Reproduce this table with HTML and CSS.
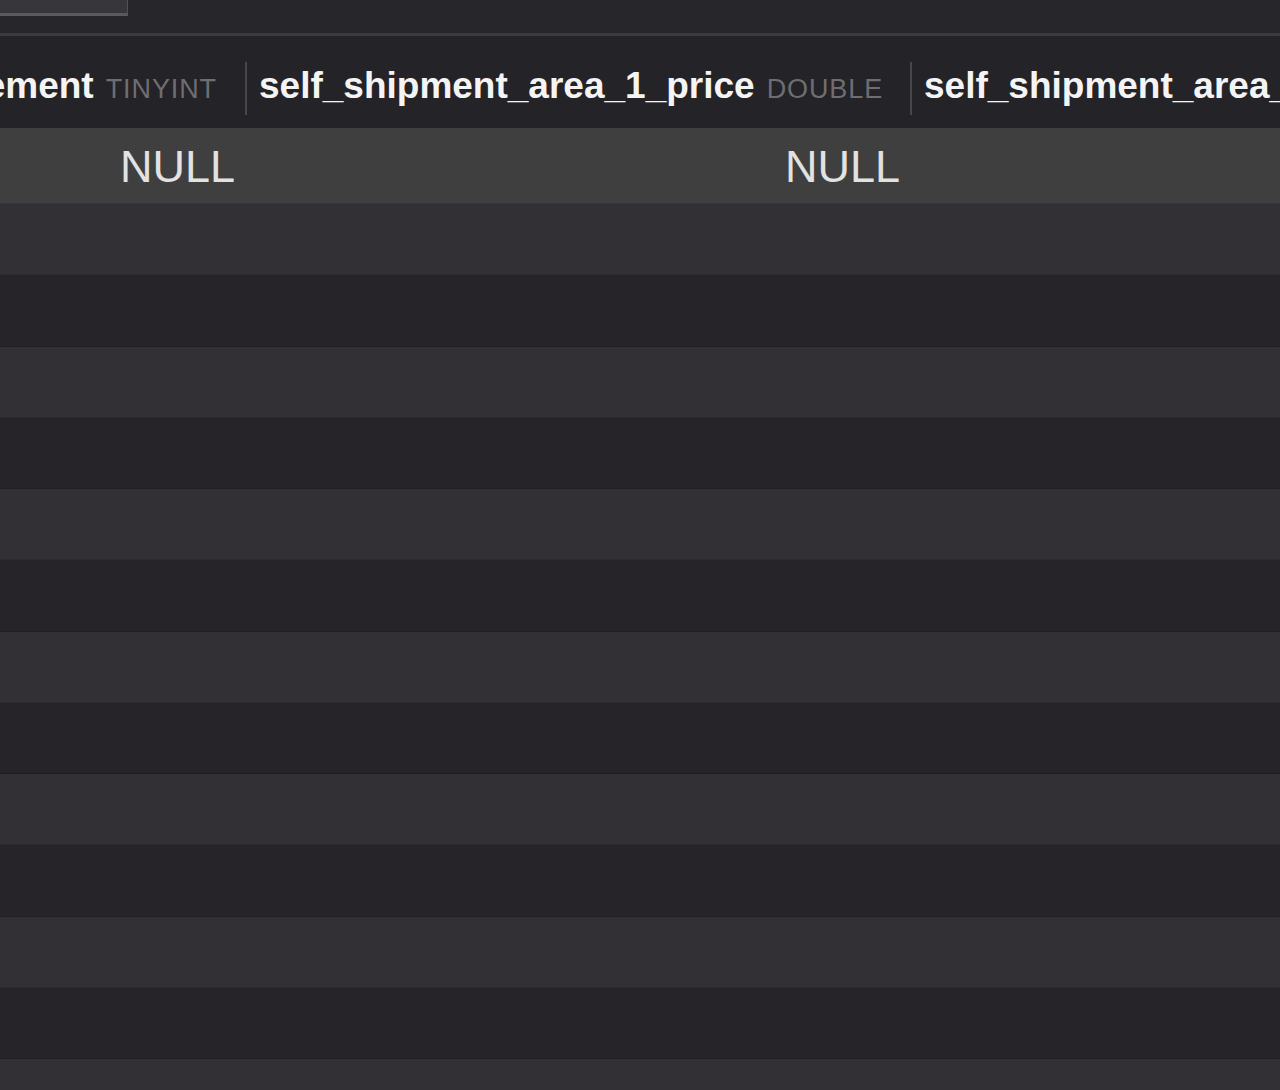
FILE: index.html
```html
<!DOCTYPE html>
<html lang="en">
<head>
<meta charset="utf-8">
<title>Table view</title>
<link rel="stylesheet" href="styles.css">
</head>
<body>
<div class="app">
  <div class="topbar">
    <div class="search-box"></div>
  </div>
  <div class="grid">
    <div class="row head">
      <div class="cell c1"><span class="name">self_management</span><span class="type">TINYINT</span></div>
      <div class="sep"></div>
      <div class="cell c2"><span class="name">self_shipment_area_1_price</span><span class="type">DOUBLE</span></div>
      <div class="sep"></div>
      <div class="cell c3"><span class="name">self_shipment_area_2_price</span><span class="type">DOUBLE</span></div>
    </div>
    <div class="row data selected">
      <div class="dcell c1">NULL</div>
      <div class="dcell c2">NULL</div>
      <div class="dcell c3"></div>
    </div>
    <div class="row data odd"></div>
    <div class="row data even"></div>
    <div class="row data odd"></div>
    <div class="row data even"></div>
    <div class="row data odd"></div>
    <div class="row data even"></div>
    <div class="row data odd"></div>
    <div class="row data even"></div>
    <div class="row data odd"></div>
    <div class="row data even"></div>
    <div class="row data odd"></div>
    <div class="row data even"></div>
    <div class="row data odd"></div>
  </div>
</div>
</body>
</html>
```

FILE: styles.css
```css
html, body {
  margin: 0;
  padding: 0;
  background: #252428;
  overflow: hidden;
}
.app {
  width: 1280px;
  height: 1090px;
  overflow: hidden;
  font-family: "Liberation Sans", Arial, sans-serif;
}
.topbar {
  height: 33px;
  background: #27262a;
  border-bottom: 3px solid #3b3a3d;
}
.search-box {
  width: 127px;
  height: 13px;
  background: #37363a;
  border-right: 1px solid #535255;
  border-bottom: 3px solid #5a595c;
}
.grid {
  display: flex;
  flex-direction: column;
}
.row {
  display: flex;
  box-sizing: border-box;
}
.row.head {
  height: 92px;
  background: #242327;
  align-items: center;
}
.cell {
  display: flex;
  align-items: baseline;
  overflow: hidden;
  white-space: nowrap;
  padding-top: 8px;
}
.cell.c1 {
  width: 245px;
  flex: none;
  justify-content: flex-end;
  padding-right: 28px;
  box-sizing: border-box;
}
.cell.c2 {
  width: 663px;
  flex: none;
  padding-left: 12px;
  box-sizing: border-box;
}
.cell.c3 {
  flex: 1;
  padding-left: 12px;
}
.name {
  font-weight: bold;
  font-size: 37px;
  color: #f4f4f4;
  flex: none;
}
.type {
  font-size: 27px;
  color: #6e6d71;
  letter-spacing: 0.9px;
  margin-left: 12px;
  flex: none;
}
.sep {
  width: 2px;
  height: 53px;
  background: #48474b;
  flex: none;
  margin-top: 12px;
}
.row.data {
  height: 71.25px;
  border-bottom: 1px solid rgba(0, 0, 0, 0.12);
}
.row.selected {
  height: 76px;
  background: #3f3f40;
  align-items: center;
}
.row.odd {
  background: #323034;
}
.row.even {
  background: #262428;
}
.dcell {
  font-size: 45px;
  color: #e2e2e2;
  text-align: right;
  box-sizing: border-box;
  padding-right: 12px;
  padding-top: 3px;
  flex: none;
}
.dcell.c1 {
  width: 247px;
}
.dcell.c2 {
  width: 665px;
}
.dcell.c3 {
  flex: 1;
}
```
